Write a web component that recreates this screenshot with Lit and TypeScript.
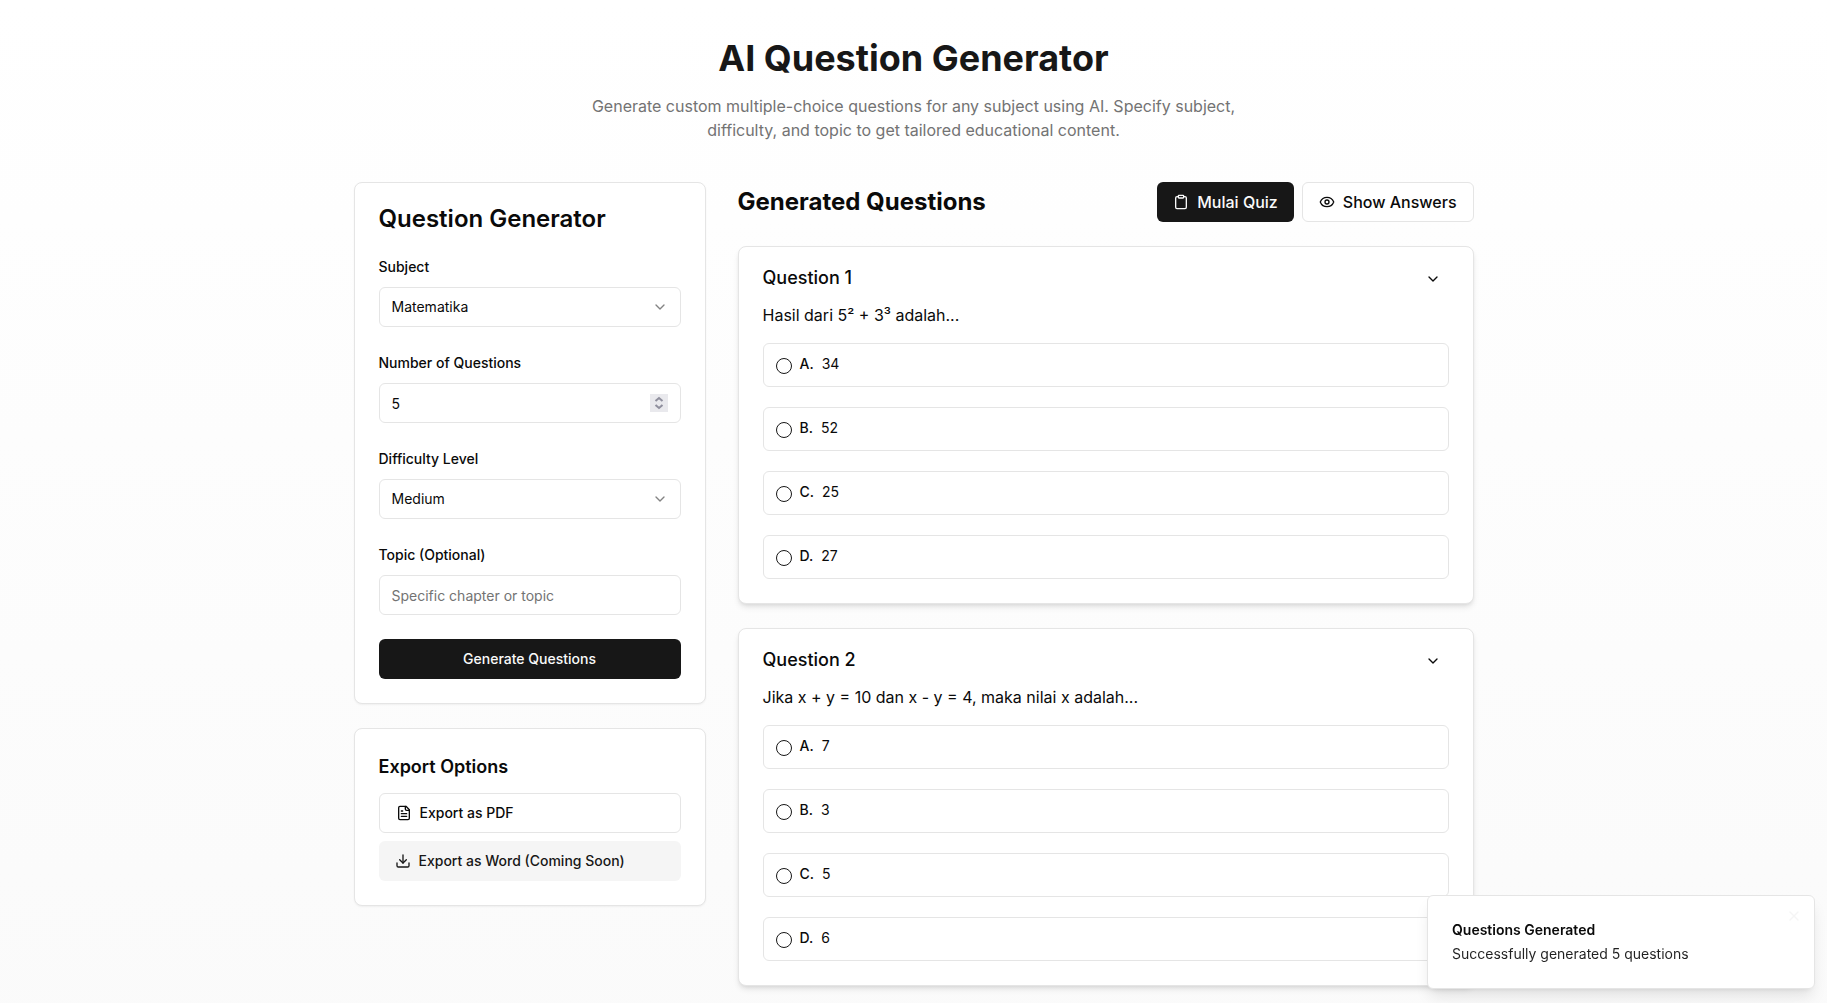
import { LitElement, html, css, svg } from "lit";
import { customElement, property } from "lit/decorators.js";

const icons = {
  chevron: svg`<path d="m6 9 6 6 6-6"/>`,
  clipboard: svg`<rect width="8" height="4" x="8" y="2" rx="1" ry="1"/><path d="M16 4h2a2 2 0 0 1 2 2v14a2 2 0 0 1-2 2H6a2 2 0 0 1-2-2V6a2 2 0 0 1 2-2h2"/>`,
  eye: svg`<path d="M2.062 12.348a1 1 0 0 1 0-.696 10.75 10.75 0 0 1 19.876 0 1 1 0 0 1 0 .696 10.75 10.75 0 0 1-19.876 0"/><circle cx="12" cy="12" r="3"/>`,
  file: svg`<path d="M15 2H6a2 2 0 0 0-2 2v16a2 2 0 0 0 2 2h12a2 2 0 0 0 2-2V7Z"/><path d="M14 2v4a2 2 0 0 0 2 2h4"/><path d="M10 9H8"/><path d="M16 13H8"/><path d="M16 17H8"/>`,
  download: svg`<path d="M21 15v4a2 2 0 0 1-2 2H5a2 2 0 0 1-2-2v-4"/><path d="m7 10 5 5 5-5"/><path d="M12 15V3"/>`,
  close: svg`<path d="M18 6 6 18"/><path d="m6 6 12 12"/>`,
};

const icon = (name: keyof typeof icons) => html`
  <svg class="icon" viewBox="0 0 24 24" fill="none" stroke="currentColor" stroke-width="2"
    stroke-linecap="round" stroke-linejoin="round" aria-hidden="true">${icons[name]}</svg>`;

const base = css`
  *, *::before, *::after { box-sizing: border-box; }
  h1, h2, h3, p { margin: 0; }
  button, input, select { font: inherit; color: inherit; margin: 0; }
  .icon { width: 16px; height: 16px; flex: none; display: block; }
  .btn {
    display: flex; align-items: center; gap: 8px; height: 40px; padding: 0 16px;
    border: 0; border-radius: 6px; font-size: 14px; line-height: 20px; font-weight: 500;
    background: #fff; cursor: pointer; white-space: nowrap;
  }
  .primary { background: #171717; color: #fafafa; }
  .outline { border: 1px solid #e5e5e5; }
  .secondary { background: #f5f5f5; color: #171717; }
`;

interface Question { text: string; options: string[]; }

@customElement("question-card")
class QuestionCard extends LitElement {
  @property({ type: Number }) number = 1;
  @property({ attribute: false }) question: Question = { text: "", options: [] };

  static styles = [base, css`
    :host { display: block; }
    .card {
      background: #fff; border: 1px solid #e5e5e5; border-radius: 8px; padding: 16px 24px 24px;
      box-shadow: 0 4px 6px -1px rgb(0 0 0 / 0.1), 0 2px 4px -2px rgb(0 0 0 / 0.1);
    }
    .head { display: flex; justify-content: space-between; align-items: flex-start; }
    .title { font-size: 18px; line-height: 30px; font-weight: 500; }
    .toggle {
      width: 32px; height: 32px; padding: 0; border: 0; background: none; border-radius: 6px;
      display: grid; place-items: center; cursor: pointer;
    }
    .text { margin-top: 8px; font-size: 16px; line-height: 24px; }
    .options {
      border: 0; padding: 0; margin: 16px 0 0; min-width: 0;
      display: flex; flex-direction: column; gap: 20px;
    }
    .option {
      display: flex; align-items: flex-start; gap: 8px; padding: 12px;
      border: 1px solid #e5e5e5; border-radius: 6px; font-size: 14px; line-height: 16px; cursor: pointer;
    }
    .option input {
      appearance: none; width: 16px; height: 16px; margin: 2px 0 0; flex: none;
      border: 1px solid #171717; border-radius: 50%;
    }
    .option input:checked { box-shadow: inset 0 0 0 3px #fff, inset 0 0 0 8px #171717; }
    .letter { font-weight: 500; }
  `];

  render() {
    return html`
      <article class="card">
        <div class="head">
          <h3 class="title">Question ${this.number}</h3>
          <button class="toggle" type="button" aria-label="Toggle question">${icon("chevron")}</button>
        </div>
        <p class="text">${this.question.text}</p>
        <fieldset class="options" aria-label=${this.question.text}>
          ${this.question.options.map((option, i) => html`
            <label class="option">
              <input type="radio" name="answer" value=${i}>
              <span class="letter">${"ABCD"[i]}.</span>
              <span>${option}</span>
            </label>`)}
        </fieldset>
      </article>`;
  }
}

@customElement("app-root")
class AppRoot extends LitElement {
  private questions: Question[] = [
    { text: "Hasil dari 5² + 3³ adalah...", options: ["34", "52", "25", "27"] },
    { text: "Jika x + y = 10 dan x - y = 4, maka nilai x adalah...", options: ["7", "3", "5", "6"] },
  ];

  static styles = [base, css`
    :host {
      display: block; min-height: 100vh; color: #0a0a0a;
      font-family: Inter, "Liberation Sans", sans-serif; font-size: 16px; line-height: 24px;
      background: linear-gradient(to bottom, #fff, #fafafa 1090px);
    }
    .page { max-width: 1152px; margin: 0 auto; padding: 38px 16px 16px; }
    .intro { text-align: center; margin-bottom: 40px; }
    .intro h1 { font-size: 36px; line-height: 40px; font-weight: 700; color: #171717; margin-bottom: 16px; }
    .intro p { max-width: 672px; margin: 0 auto; color: #737373; }
    .columns { display: grid; grid-template-columns: repeat(3, minmax(0, 1fr)); gap: 32px; align-items: start; }
    .side { display: flex; flex-direction: column; gap: 24px; }
    .panel {
      background: #fff; border: 1px solid #e5e5e5; border-radius: 8px; padding: 24px;
      box-shadow: 0 1px 2px 0 rgb(0 0 0 / 0.05);
    }
    .form { display: flex; flex-direction: column; gap: 24px; }
    .form h2 { font-size: 24px; line-height: 24px; font-weight: 600; }
    .field { display: flex; flex-direction: column; gap: 8px; }
    .field label { align-self: flex-start; font-size: 14px; line-height: 24px; font-weight: 500; }
    .control {
      width: 100%; height: 40px; padding: 0 12px; border: 1px solid #e5e5e5; border-radius: 6px;
      background: #fff; font-size: 14px; line-height: 20px;
    }
    .control::placeholder { color: #737373; opacity: 1; }
    .control[type="number"] { appearance: textfield; }
    .control::-webkit-inner-spin-button { appearance: none; margin: 0; }
    .picker { display: grid; align-items: center; }
    .picker > * { grid-area: 1 / 1; }
    .picker select { appearance: none; }
    .picker .icon { justify-self: end; margin-right: 13px; opacity: 0.5; pointer-events: none; }
    .stepper {
      justify-self: end; margin-right: 13px; width: 18px; height: 18px; background: #e9e9ed;
      pointer-events: none;
    }
    .submit { justify-content: center; }
    .exports { display: flex; flex-direction: column; gap: 8px; }
    .exports h2 { font-size: 18px; line-height: 28px; font-weight: 600; margin-bottom: 4px; }
    .main { grid-column: span 2; display: flex; flex-direction: column; gap: 24px; }
    .bar { display: flex; align-items: center; justify-content: space-between; }
    .bar h2 { font-size: 24px; line-height: 32px; font-weight: 700; }
    .actions { display: flex; gap: 8px; }
    .actions .btn { font-size: 16px; line-height: 24px; }
    .toast {
      position: fixed; right: 12px; bottom: 14px; width: 388px; padding: 24px;
      background: #fff; border: 1px solid #e5e5e5; border-radius: 6px;
      box-shadow: 0 10px 15px -3px rgb(0 0 0 / 0.1), 0 4px 6px -4px rgb(0 0 0 / 0.1);
      display: flex; flex-direction: column; gap: 4px; font-size: 14px; line-height: 20px;
    }
    .toast strong { font-weight: 600; }
    .toast p { opacity: 0.9; }
    .dismiss {
      position: absolute; top: 8px; right: 8px; padding: 4px; border: 0; background: none;
      color: #f5f5f5; cursor: pointer;
    }
  `];

  render() {
    return html`
      <div class="page">
        <header class="intro">
          <h1>AI Question Generator</h1>
          <p>Generate custom multiple-choice questions for any subject using AI. Specify subject, difficulty, and topic to get tailored educational content.</p>
        </header>
        <div class="columns">
          <aside class="side">
            <form class="panel form" @submit=${(e: Event) => e.preventDefault()}>
              <h2>Question Generator</h2>
              <div class="field">
                <label for="subject">Subject</label>
                <div class="picker">
                  <select class="control" id="subject"><option>Matematika</option></select>
                  ${icon("chevron")}
                </div>
              </div>
              <div class="field">
                <label for="count">Number of Questions</label>
                <div class="picker">
                  <input class="control" id="count" type="number" min="1" value="5">
                  <svg class="stepper" viewBox="0 0 18 18" fill="none" stroke="#8f8f9d" stroke-width="2" aria-hidden="true">
                    <path d="m5.5 7 3.5-3 3.5 3"/><path d="m5.5 11 3.5 3 3.5-3"/>
                  </svg>
                </div>
              </div>
              <div class="field">
                <label for="level">Difficulty Level</label>
                <div class="picker">
                  <select class="control" id="level"><option>Medium</option></select>
                  ${icon("chevron")}
                </div>
              </div>
              <div class="field">
                <label for="topic">Topic (Optional)</label>
                <input class="control" id="topic" type="text" placeholder="Specific chapter or topic">
              </div>
              <button class="btn primary submit" type="submit">Generate Questions</button>
            </form>
            <section class="panel exports">
              <h2>Export Options</h2>
              <button class="btn outline" type="button">${icon("file")}Export as PDF</button>
              <button class="btn secondary" type="button">${icon("download")}Export as Word (Coming Soon)</button>
            </section>
          </aside>
          <main class="main">
            <div class="bar">
              <h2>Generated Questions</h2>
              <div class="actions">
                <button class="btn primary" type="button">${icon("clipboard")}Mulai Quiz</button>
                <button class="btn outline" type="button">${icon("eye")}Show Answers</button>
              </div>
            </div>
            ${this.questions.map((q, i) => html`<question-card .number=${i + 1} .question=${q}></question-card>`)}
          </main>
        </div>
      </div>
      <div class="toast" role="status">
        <strong>Questions Generated</strong>
        <p>Successfully generated 5 questions</p>
        <button class="dismiss" type="button" aria-label="Close">${icon("close")}</button>
      </div>`;
  }
}
